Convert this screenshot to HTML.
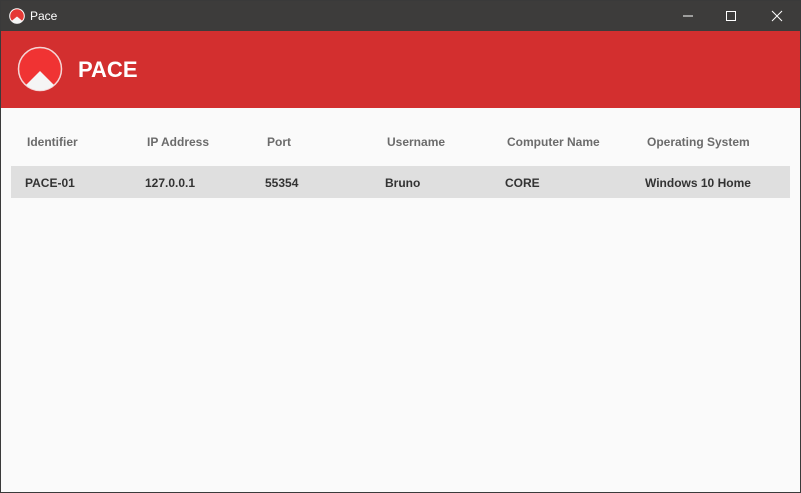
<!DOCTYPE html><html><head><style>
body{margin:0;width:801px;height:493px;overflow:hidden;background:#fafafa;font-family:"Liberation Sans",sans-serif;position:relative}
.frame{position:absolute;left:0;top:0;width:799px;height:491px;border:1px solid #3a3a3a}
.tb{position:absolute;left:0;top:0;width:801px;height:31px;background:#3d3c3b;color:#fff;font-size:12px}
.hd{position:absolute;left:1px;top:31px;width:799px;height:77px;background:#d32f2f}
.t{position:absolute;font-size:12px;font-weight:bold}
.h{color:#6b6b6b;top:135px}
.r{color:#333;top:176px}
.row{position:absolute;left:11px;top:166px;width:779px;height:32px;background:#dfdfdf}
</style></head><body>
<div class="tb">
<svg style="position:absolute;left:9px;top:8px" width="16" height="16" viewBox="0 0 16 16"><circle cx="8" cy="8" r="7.3" fill="#e53935" stroke="#fff" stroke-width="1"/><path d="M2.5 13 L8 8.5 L13.5 13 A7 7 0 0 1 2.5 13Z" fill="#f5f5f5"/></svg>
<span style="position:absolute;left:30px;top:9px">Pace</span>
<svg style="position:absolute;left:680px;top:9px" width="110" height="14"><line x1="3" y1="7" x2="13" y2="7" stroke="#fff"/><rect x="46.5" y="2.5" width="9" height="9" fill="none" stroke="#fff"/><path d="M92 2 L102 12 M102 2 L92 12" stroke="#fff"/></svg>
</div>
<div class="hd">
<svg style="position:absolute;left:16px;top:15px" width="46" height="46" viewBox="0 0 46 46"><circle cx="23" cy="23" r="21.5" fill="#f03333" stroke="#f5d5d5" stroke-width="1.5"/><path d="M9 39 L23 25 L37 39 A21 21 0 0 1 9 39Z" fill="#f5f5f5"/></svg>
<span style="position:absolute;left:77px;top:26px;color:#fff;font-size:22px;font-weight:bold">PACE</span>
</div>
<div class="row"></div>
<span class="t h" style="left:27px">Identifier</span>
<span class="t h" style="left:147px">IP Address</span>
<span class="t h" style="left:267px">Port</span>
<span class="t h" style="left:387px">Username</span>
<span class="t h" style="left:507px">Computer Name</span>
<span class="t h" style="left:647px">Operating System</span>
<span class="t r" style="left:25px">PACE-01</span>
<span class="t r" style="left:145px">127.0.0.1</span>
<span class="t r" style="left:265px">55354</span>
<span class="t r" style="left:385px">Bruno</span>
<span class="t r" style="left:505px">CORE</span>
<span class="t r" style="left:645px">Windows 10 Home</span>
<div class="frame"></div>
</body></html>
